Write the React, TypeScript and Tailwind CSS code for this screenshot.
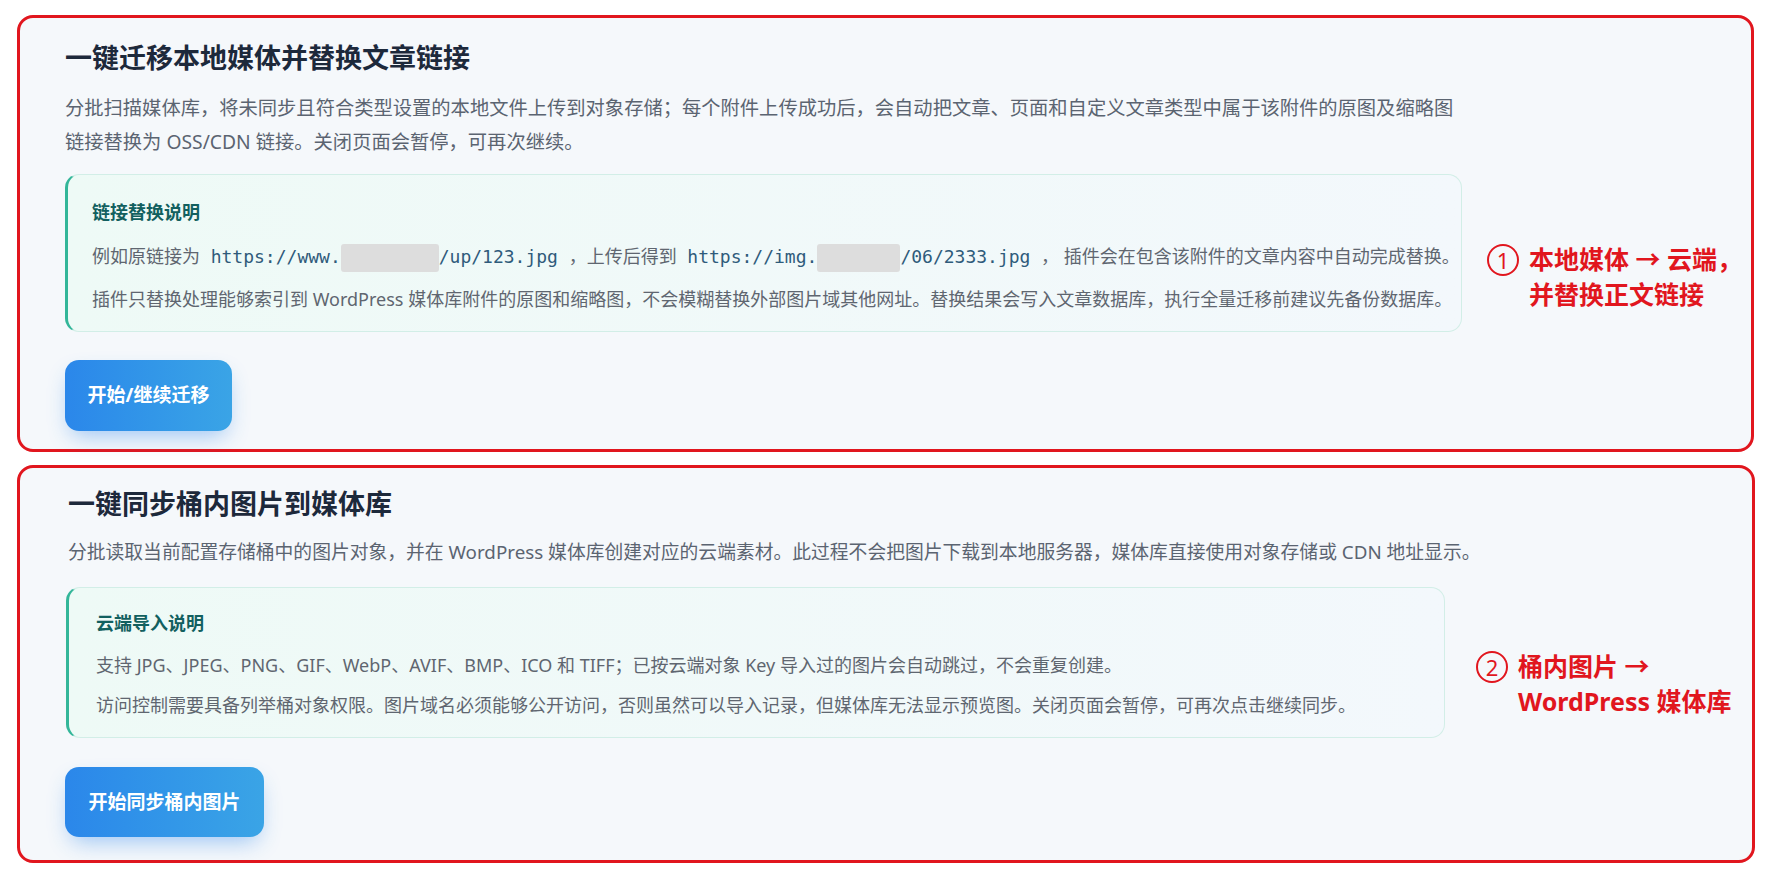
import type { ReactNode } from "react";

const font = { fontFamily: '"Noto Sans", "Noto Sans CJK SC", sans-serif' };

function Blur({ w }: { w: string }) {
  return <span className={`inline-block h-[28px] ${w} rounded-[3px] bg-[#dddddd] align-middle`} />;
}

function Code({ children }: { children: ReactNode }) {
  return (
    <code className="px-[6px] text-[18px] text-[#2f5b7b] [font-family:'DejaVu_Sans_Mono',monospace]">
      {children}
    </code>
  );
}

function Note({ num, lines }: { num: string; lines: ReactNode[] }) {
  return (
    <div className="flex items-start gap-[10px] text-[#e1161e]">
      <span className="mt-[2px] flex h-[32px] w-[32px] flex-none items-center justify-center rounded-full border-[2.5px] border-[#e1161e] text-[22px] leading-none">
        {num}
      </span>
      <div className="text-[25px] font-bold leading-[35px]">
        {lines.map((l, i) => (
          <div key={i}>{l}</div>
        ))}
      </div>
    </div>
  );
}

function StartButton({ label, w }: { label: string; w: string }) {
  return (
    <button
      className={`flex items-center justify-center ${w} rounded-[14px] bg-gradient-to-r from-[#2b87ea] to-[#3aa4e6] text-[19px] font-bold text-white shadow-[0_10px_22px_-6px_rgba(40,130,235,0.45)]`}
    >
      {label}
    </button>
  );
}

export default function App() {
  return (
    <div className="min-h-screen bg-white pl-[17px] pt-[15px]" style={font}>
      {/* card 1 */}
      <section className="w-[1737px] rounded-[16px] border-[3px] border-[#e1161e] bg-[#f5f8fb] pl-[45px] pt-[22px] pb-[18px]">
        <h2 className="text-[27px] font-bold leading-[36px] text-[#1d293b]">一键迁移本地媒体并替换文章链接</h2>
        <p className="mt-[15px] w-[1398px] text-[19.3px] leading-[34px] text-[#5b6471]">
          分批扫描媒体库，将未同步且符合类型设置的本地文件上传到对象存储；每个附件上传成功后，会自动把文章、页面和自定义文章类型中属于该附件的原图及缩略图链接替换为 OSS/CDN 链接。关闭页面会暂停，可再次继续。
        </p>
        <div className="mt-[15px] flex items-start">
          <div className="h-[158px] w-[1397px] flex-none rounded-[14px] border border-l-[3px] border-[#d2eee7] border-l-[#33b699] bg-gradient-to-r from-[#eefaf6] to-[#f3f8fc] pl-[24px] pt-[22px]">
            <h3 className="text-[18px] font-bold leading-[30px] text-[#12605f]">链接替换说明</h3>
            <p className="mt-[14px] whitespace-nowrap text-[18px] leading-[30px] text-[#5f6670]">
              例如原链接为 <Code>https://www.<Blur w="w-[98px]" />/up/123.jpg</Code> ，上传后得到{" "}
              <Code>https://img.<Blur w="w-[83px]" />/06/2333.jpg</Code> ， 插件会在包含该附件的文章内容中自动完成替换。
            </p>
            <p className="mt-[12px] text-[18px] leading-[30px] text-[#5f6670]">
              插件只替换处理能够索引到 WordPress 媒体库附件的原图和缩略图，不会模糊替换外部图片域其他网址。替换结果会写入文章数据库，执行全量迁移前建议先备份数据库。
            </p>
          </div>
          <div className="ml-[25px] mt-[68px]">
            <Note num="1" lines={["本地媒体 → 云端，", "并替换正文链接"]} />
          </div>
        </div>
        <div className="mt-[28px] flex h-[71px]">
          <StartButton label="开始/继续迁移" w="w-[167px]" />
        </div>
      </section>

      {/* card 2 */}
      <section className="mt-[13px] w-[1738px] rounded-[16px] border-[3px] border-[#e1161e] bg-[#f5f8fb] pl-[48px] pt-[18px] pb-[23px]">
        <h2 className="text-[27px] font-bold leading-[36px] text-[#1d293b]">一键同步桶内图片到媒体库</h2>
        <p className="mt-[13px] text-[18.8px] leading-[34px] text-[#5b6471]">
          分批读取当前配置存储桶中的图片对象，并在 WordPress 媒体库创建对应的云端素材。此过程不会把图片下载到本地服务器，媒体库直接使用对象存储或 CDN 地址显示。
        </p>
        <div className="mt-[18px] flex items-start">
          <div className="-ml-[2px] h-[151px] w-[1379px] flex-none rounded-[14px] border border-l-[3px] border-[#d2eee7] border-l-[#33b699] bg-gradient-to-r from-[#eefaf6] to-[#f3f8fc] pl-[27px] pt-[20px]">
            <h3 className="text-[18px] font-bold leading-[30px] text-[#12605f]">云端导入说明</h3>
            <p className="mt-[12px] text-[18px] leading-[30px] text-[#5f6670]">
              支持 JPG、JPEG、PNG、GIF、WebP、AVIF、BMP、ICO 和 TIFF；已按云端对象 Key 导入过的图片会自动跳过，不会重复创建。
            </p>
            <p className="mt-[10px] text-[18px] leading-[30px] text-[#5f6670]">
              访问控制需要具备列举桶对象权限。图片域名必须能够公开访问，否则虽然可以导入记录，但媒体库无法显示预览图。关闭页面会暂停，可再次点击继续同步。
            </p>
          </div>
          <div className="ml-[31px] mt-[62px]">
            <Note num="2" lines={["桶内图片 →", "WordPress 媒体库"]} />
          </div>
        </div>
        <div className="mt-[29px] -ml-[3px] flex h-[70px]">
          <StartButton label="开始同步桶内图片" w="w-[199px]" />
        </div>
      </section>
    </div>
  );
}
